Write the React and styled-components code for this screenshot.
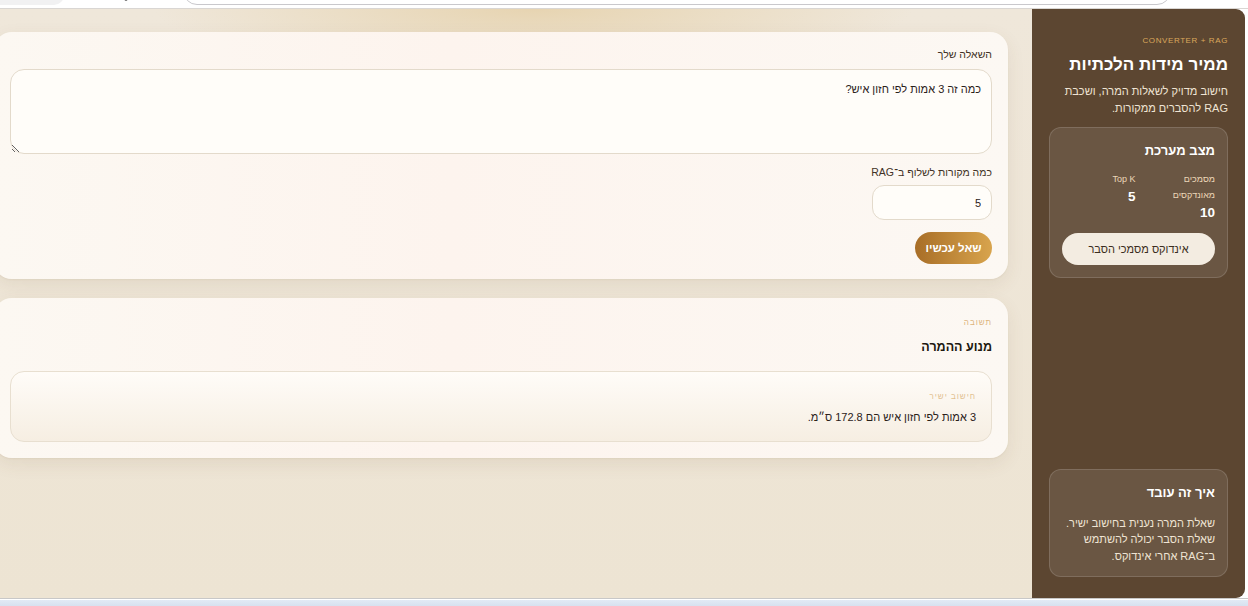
import React, { useState } from "react";
import styled, { createGlobalStyle } from "styled-components";

const GlobalStyle = createGlobalStyle`
  html, body {
    margin: 0;
    padding: 0;
    height: 100%;
    overflow: hidden;
  }
  body {
    font-family: "Liberation Sans", "DejaVu Sans", sans-serif;
    background: #fff;
  }
  * {
    box-sizing: border-box;
  }
`;

const Frame = styled.div`
  width: 1248px;
  height: 606px;
  display: flex;
  flex-direction: column;
  overflow: hidden;
`;

const TopBar = styled.div`
  height: 9px;
  flex: 0 0 9px;
  background: #fff;
  border-bottom: 1px solid #d9d6d3;
  display: flex;
  align-items: flex-end;
  overflow: hidden;
  direction: ltr;
`;

const ChromeTab = styled.div`
  flex: 0 0 64px;
  height: 30px;
  margin-bottom: 3px;
  background: #f1f1f2;
  border-radius: 0 0 10px 0;
`;

const ChromeIcon = styled.div`
  flex: 0 0 8px;
  height: 30px;
  margin: 0 0 7px 58px;
  background: #6a6a6a;
  border-radius: 50%;
`;

const AddressBar = styled.div`
  flex: 0 0 988px;
  height: 30px;
  margin: 0 0 3px 53px;
  border: 1px solid #c9c8cc;
  border-radius: 0 0 14px 14px;
`;

const Page = styled.div`
  flex: 1;
  display: flex;
  direction: rtl;
  background: #fff;
  padding-right: 3px;
  min-height: 0;
`;

const Sidebar = styled.aside`
  flex: 0 0 213px;
  background: #5c4631;
  border-radius: 0 9px 9px 0;
  padding: 26px 17px 21px;
  display: flex;
  flex-direction: column;
  color: #fff;
`;

const Eyebrow = styled.div`
  font-size: 8px;
  letter-spacing: ${p => (p.$ltr ? "0.6px" : "1px")};
  color: ${p => p.$color || "#dba85c"};
  direction: ${p => (p.$ltr ? "ltr" : "rtl")};
  text-align: right;
  line-height: 12px;
`;

const SideTitle = styled.h1`
  margin: 6px 0 6px;
  font-weight: 700;
  font-size: 17px;
  line-height: 24px;
  color: #fff;
`;

const SideText = styled.p`
  margin: 0;
  font-size: 11px;
  line-height: 16.5px;
  color: #efe4d4;
`;

const InfoBox = styled.div`
  margin-top: ${p => (p.$push ? "auto" : "11px")};
  background: rgba(255, 255, 255, 0.09);
  border: 1px solid rgba(255, 255, 255, 0.14);
  border-radius: 12px;
  padding: 14px 12px 12px;
`;

const BoxTitle = styled.h3`
  margin: 0 0 ${p => p.$gap || 11}px;
  font-weight: 700;
  font-size: 13px;
  line-height: 18px;
  color: #fff;
`;

const Stats = styled.div`
  display: grid;
  grid-template-columns: 1fr 1fr;
  column-gap: 6px;
  margin-bottom: 12px;
`;

const Stat = styled.div`
  display: flex;
  flex-direction: column;
`;

const StatLabel = styled.div`
  font-size: 9px;
  line-height: 16px;
  color: #ecd6b8;
`;

const StatValue = styled.div`
  font-size: 13.5px;
  font-weight: 700;
  line-height: 17px;
  color: #fff;
  margin-top: 1px;
`;

const LightButton = styled.button`
  width: 100%;
  height: 32px;
  border: none;
  border-radius: 16px;
  background: #f3ece1;
  color: #3b2d20;
  font-family: inherit;
  font-size: 11px;
`;

const Main = styled.main`
  flex: 1;
  padding: 23px 24px 0 0;
  margin-left: -6px;
  background:
    radial-gradient(ellipse 380px 60px at 52% 0%, rgba(228, 206, 164, 0.75), rgba(228, 206, 164, 0) 100%),
    linear-gradient(180deg, #efe7da 0%, #ede4d3 100%);
  display: flex;
  flex-direction: column;
  gap: 19px;
  align-items: stretch;
`;

const Card = styled.section`
  background: linear-gradient(90deg, #fcf8f2 0%, #fdf4ee 45%, #fcf8f3 100%);
  border-radius: 18px;
  padding: ${p => p.$pad || "15px 16px 15px"};
  box-shadow: 0 6px 18px rgba(110, 80, 40, 0.09), 0 1px 2px rgba(110, 80, 40, 0.06);
  display: flex;
  flex-direction: column;
  align-items: stretch;
`;

const Label = styled.label`
  font-size: 10.5px;
  line-height: 14px;
  color: #3f3226;
  margin-bottom: ${p => p.$gap || 8}px;
`;

const TextArea = styled.textarea`
  height: 85px;
  resize: vertical;
  border: 1px solid #e3dacb;
  border-radius: 14px;
  background: #fffdf9;
  padding: 11px 10px;
  font-family: inherit;
  font-size: 11px;
  line-height: 16px;
  color: #2b2119;
  margin-bottom: 11px;
  outline: none;
`;

const NumberInput = styled.input`
  width: 120px;
  height: 35px;
  border: 1px solid #e3dacb;
  border-radius: 12px;
  background: #fffdf9;
  padding: 0 10px;
  font-family: inherit;
  font-size: 11px;
  color: #2b2119;
  outline: none;
  margin-bottom: 12px;
`;

const AskButton = styled.button`
  align-self: flex-start;
  width: 77px;
  height: 32px;
  border: none;
  border-radius: 16px;
  background: linear-gradient(90deg, #a86e27 0%, #d8a44d 100%);
  color: #fff;
  font-family: inherit;
  font-weight: 700;
  font-size: 11.5px;
`;

const AnswerTitle = styled.h2`
  margin: 9px 0 15px;
  font-weight: 700;
  font-size: 12.5px;
  line-height: 18px;
  color: #201810;
`;

const ResultBox = styled.div`
  border: 1px solid #e8dfd0;
  border-radius: 14px;
  background: linear-gradient(180deg, #fffcf8 0%, #f6eee2 100%);
  padding: 19px 15px 16px;
`;

const ResultText = styled.div`
  margin-top: 6px;
  font-size: 11px;
  line-height: 16px;
  color: #2b2119;
`;

const BottomBar = styled.div`
  flex: 0 0 8px;
  border-top: 1px solid #c8c8c8;
  box-shadow: inset 0 1px 0 #fff;
  background: linear-gradient(180deg, #e4ecf6 0%, #d7e1ef 100%);
`;

export default function App() {
  const [question, setQuestion] = useState("כמה זה 3 אמות לפי חזון איש?");
  const [topK, setTopK] = useState(5);

  return (
    <Frame>
      <GlobalStyle />
      <TopBar>
        <ChromeTab />
        <ChromeIcon />
        <AddressBar />
      </TopBar>
      <Page>
        <Sidebar>
          <Eyebrow $ltr>CONVERTER + RAG</Eyebrow>
          <SideTitle>ממיר מידות הלכתיות</SideTitle>
          <SideText>חישוב מדויק לשאלות המרה, ושכבת RAG להסברים ממקורות.</SideText>
          <InfoBox>
            <BoxTitle>מצב מערכת</BoxTitle>
            <Stats>
              <Stat>
                <StatLabel>מסמכים מאונדקסים</StatLabel>
                <StatValue>10</StatValue>
              </Stat>
              <Stat>
                <StatLabel>Top K</StatLabel>
                <StatValue>{topK}</StatValue>
              </Stat>
            </Stats>
            <LightButton>אינדוקס מסמכי הסבר</LightButton>
          </InfoBox>
          <InfoBox $push>
            <BoxTitle $gap={13}>איך זה עובד</BoxTitle>
            <SideText>
              שאלת המרה נענית בחישוב ישיר. שאלת הסבר יכולה להשתמש ב־RAG אחרי אינדוקס.
            </SideText>
          </InfoBox>
        </Sidebar>
        <Main>
          <Card>
            <Label>השאלה שלך</Label>
            <TextArea
              value={question}
              spellCheck={false}
              onChange={e => setQuestion(e.target.value)}
            />
            <Label $gap={6}>כמה מקורות לשלוף ב־RAG</Label>
            <NumberInput
              type="text"
              value={topK}
              onChange={e => setTopK(e.target.value)}
            />
            <AskButton>שאל עכשיו</AskButton>
          </Card>
          <Card $pad="19px 16px 16px">
            <Eyebrow $color="#dcb47c">תשובה</Eyebrow>
            <AnswerTitle>מנוע ההמרה</AnswerTitle>
            <ResultBox>
              <Eyebrow $color="#e2c190">חישוב ישיר</Eyebrow>
              <ResultText>3 אמות לפי חזון איש הם 172.8 ס״מ.</ResultText>
            </ResultBox>
          </Card>
        </Main>
      </Page>
      <BottomBar />
    </Frame>
  );
}
